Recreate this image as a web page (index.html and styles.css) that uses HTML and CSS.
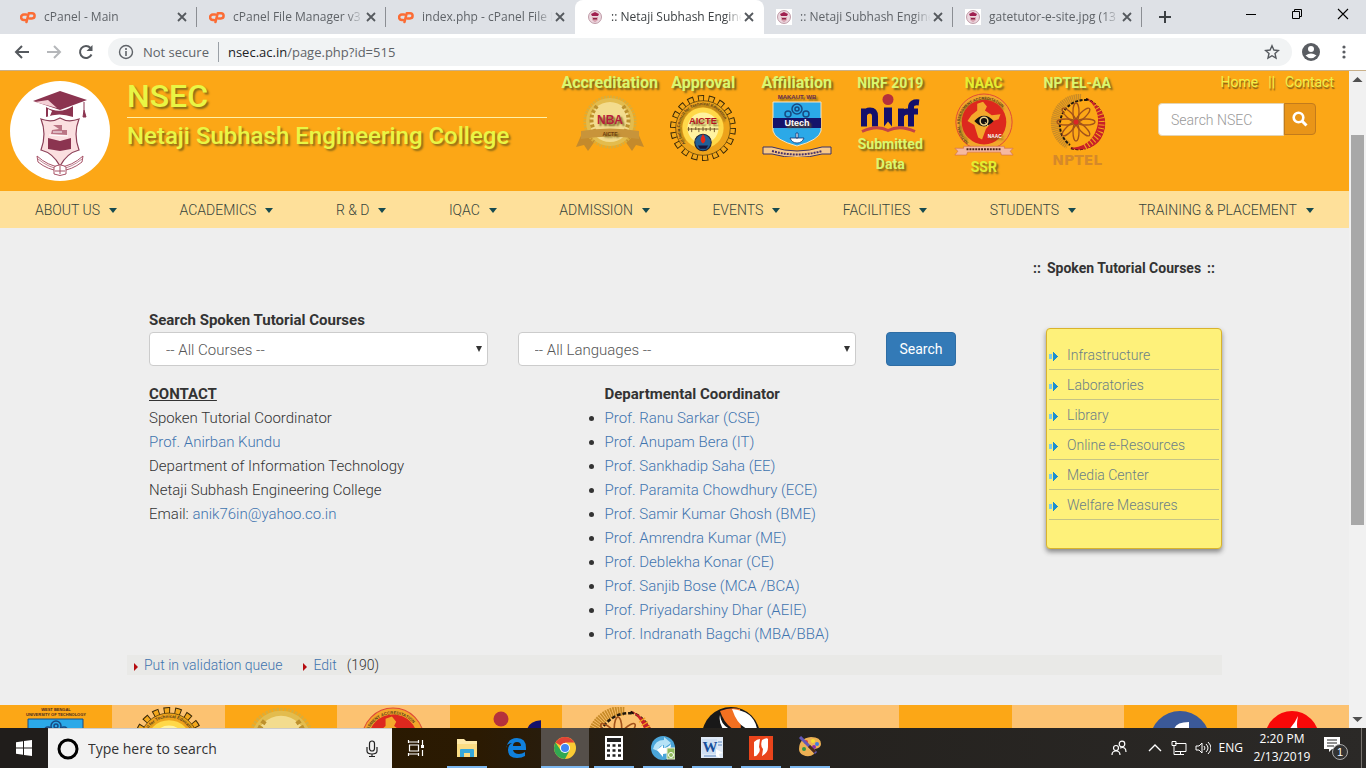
FILE: index.html
```html
<!DOCTYPE html>
<html lang="en">
<head>
<meta charset="utf-8">
<title>:: Netaji Subhash Engineering College ::</title>
<link rel="stylesheet" href="styles.css">
</head>
<body>
<svg class="defs" aria-hidden="true">
  <symbol id="cp" viewBox="0 0 16 16"><path d="M6 5.500H3.800a2.700 2.700 0 0 0 0 5.400H5M6.500 13 8.700 4.200h3.300a2.600 2.600 0 0 1 0 5.200H9.500" fill="none" stroke="#fb6c35" stroke-width="2.500" stroke-linecap="round" stroke-linejoin="round"/></symbol>
  <symbol id="crestmini" viewBox="0 0 16 16"><circle cx="8" cy="8" r="6.500" fill="#ecd8df" stroke="#a87888" stroke-width=".7"/><path d="M4 5l4-2 4 2-1 2H5z" fill="#a02050"/><path d="M5 8h6v3l-3 2.500L5 11z" fill="#d9a6b4"/><path d="M6 9h4v1.500H6z" fill="#8e2348"/></symbol>
  <symbol id="x" viewBox="0 0 12 12"><path d="M2 2l8 8M10 2l-8 8" stroke="#55595e" stroke-width="1.800"/></symbol>
  <symbol id="aicte" viewBox="0 0 64 64">
    <circle cx="32" cy="32" r="29" fill="none" stroke="#3c2a08" stroke-width="6" stroke-dasharray="5.900 4.222"/>
    <circle cx="32" cy="32" r="28.500" fill="none" stroke="#f3a81c" stroke-width="5" stroke-dasharray="4.100 5.848" stroke-dashoffset="-.850"/>
    <circle cx="32" cy="32" r="26.500" fill="#eda31b" stroke="#3c2a08" stroke-width=".6"/>
    <path id="ring" d="M15 47a22.500 22.500 0 1 1 34 0" fill="none"/>
    <text class="g-ring"><textPath href="#ring">All India Council for Technical Education</textPath></text>
    <circle cx="32" cy="32" r="20" fill="#ffd848"/><circle cx="32" cy="32" r="15" fill="#fff3a0"/>
    <text x="32" y="28" class="g-aicte">AICTE</text>
    <path d="M17 33h30M18 31v4M21 32v4M25 31v3M28 32v4M32 31v4M35 32v3M39 31v4M43 32v4" stroke="#604018" stroke-width=".8"/>
    <circle cx="32" cy="46" r="8" fill="#225f96" stroke="#223"/><path d="M32 38c4 5 2 8 0 9-3-2-3-5 0-9z" fill="#e52818"/><path d="M27 49h10l-2 3h-6z" fill="#18153c"/>
  </symbol>
  <symbol id="nba" viewBox="0 0 70 60">
    <path d="M8 38 1 54l8-2 4 6 12-17zM62 38l7 16-8-2-4 6-12-17z" fill="#c48a2c"/>
    <circle cx="35" cy="29" r="25" fill="none" stroke="#d9ad3b" stroke-width="3" stroke-dasharray="2 1"/>
    <circle cx="35" cy="29" r="24" fill="#e3bc4e"/><circle cx="35" cy="29" r="20" fill="#f3dc8e"/>
    <path d="M20 39Q12 25 22 13M50 39q8-14-2-26" fill="none" stroke="#bd902c" stroke-width="4" stroke-dasharray="3 2"/>
    <text x="35" y="31" class="g-nba">NBA</text>
    <path d="M6 38q29-5 58 0v8q-29-5-58 0z" fill="#c8943a"/><text x="35" y="43" class="g-small">AICTE</text>
  </symbol>
  <symbol id="naac" viewBox="0 0 64 66">
    <circle cx="32" cy="30" r="29" fill="#f3a62a" stroke="#df4938"/>
    <path id="ring2" d="M16 51a25 25 0 1 1 32 0" fill="none"/><text class="g-ring"><textPath href="#ring2">NATIONAL ASSESSMENT ACCREDITATION</textPath></text>
    <circle cx="32" cy="30" r="23" fill="#dd281e"/>
    <path d="M25 11l6-2 4 5-2 4 7 5 9-1-2 5-6 2-7 8-4 11-4-2-4-13-7-4 4-6 6-5z" fill="#f4a82c"/>
    <path d="M22 29q10-11 20 0-10 11-20 0z" fill="#151010"/><circle cx="32" cy="29" r="4" fill="none" stroke="#f0d38a" stroke-width="1.500"/><path d="M33 30l3 4" stroke="#f0d38a"/>
    <text x="43" y="46" class="g-naac">NAAC</text>
    <path d="M2 57h9v-2h42v2h9l-3 3 3 4H50l-1-3H15l-1 3H2l3-4z" fill="#f5b9a0" stroke="#cf6848" stroke-width=".6"/><path d="M14 58h36" stroke="#452018" stroke-width="2" stroke-dasharray="2 1"/>
  </symbol>
  <symbol id="nptel" viewBox="0 0 60 60">
    <g fill="none"><path d="M34 5a25 25 0 0 0-13 47" stroke="#c88b28" stroke-width="8" stroke-dasharray="1.300 .6"/><path d="M40 7a25 25 0 0 0-17 45" stroke="#20180d" stroke-width="2" stroke-dasharray="3 1.500"/>
    <path d="M39 6a25 25 0 0 1-16 49" stroke="#1d0d08" stroke-width="2" stroke-dasharray="3 1.500"/><path d="M40 5q20 11 18 29-3 18-19 22-9 2-16-1 18-1 25-15 9-19-8-35z" fill="#c92028"/><path d="M48 12q10 13 5 27-5 9-16 15" stroke="#f4a51e" stroke-width="6" stroke-dasharray="1 2.500"/>
    <g stroke="#a2521b" stroke-width="1.300"><ellipse cx="29" cy="19" rx="3" ry="9"/><ellipse cx="29" cy="39" rx="3" ry="9"/><ellipse cx="19" cy="29" rx="9" ry="3"/><ellipse cx="39" cy="29" rx="9" ry="3"/><g transform="rotate(45 29 29)"><ellipse cx="29" cy="19" rx="3" ry="9"/><ellipse cx="29" cy="39" rx="3" ry="9"/><ellipse cx="19" cy="29" rx="9" ry="3"/><ellipse cx="39" cy="29" rx="9" ry="3"/></g></g></g>
    <circle cx="29" cy="29" r="2.500" fill="#d92626"/>
  </symbol>
  <symbol id="nirf" viewBox="0 0 60 40">
    <circle cx="28" cy="6" r="5.500" fill="#b5313c"/>
    <g fill="none" stroke="#14106c" stroke-width="6"><path d="M4 33V15M4 21q2-4 6-4 5 0 5 6v10M41 33V15M41 22q2-4 7-4M51 33V14q0-6 8-5M46 18h12"/></g>
    <path d="M24 14h8v19l-4-5-4 5z" fill="#14106c"/><path d="M2 38q15-7 26-1 12-6 27 1" fill="none" stroke="#c34448" stroke-width="3"/>
  </symbol>
  <symbol id="utech" viewBox="0 0 70 64">
    <text x="35" y="6" class="g-mak">MAKAUT, WB</text>
    <path d="M11 9h48v29q-2 9-24 15Q13 47 11 38z" fill="#2ba9e8" stroke="#f7e3c0"/><path d="M11 25h48v10H11z" fill="#14136b"/>
    <g fill="none" stroke="#174a83" stroke-width="1.500"><circle cx="35" cy="16" r="5"/><circle cx="35" cy="16" r="2"/><circle cx="26" cy="21" r="3"/><circle cx="44" cy="21" r="3"/></g>
    <text x="35" y="33" class="g-utech">Utech</text><path d="M28 45h14q-2 5-7 5t-7-5zM34 40h2v5h-2z" fill="#fff" stroke="#123372" stroke-width=".8"/>
    <path d="M1 54h9q25 8 50 0h9v7h-9q-25 7-50 0H1z" fill="#f7c98b" stroke="#3b3267"/><path d="M10 58q25 7 50 0" fill="none" stroke="#473268" stroke-width="2" stroke-dasharray="2 1"/>
  </symbol>
</svg>

<div class="tabs">
  <div class="tab"><svg class="fav"><use href="#cp"/></svg><span>cPanel - Main</span><button aria-label="Close tab"><svg><use href="#x"/></svg></button></div>
  <div class="tab"><svg class="fav"><use href="#cp"/></svg><span>cPanel File Manager v3</span><button aria-label="Close tab"><svg><use href="#x"/></svg></button></div>
  <div class="tab before"><svg class="fav"><use href="#cp"/></svg><span>index.php - cPanel File M</span><button aria-label="Close tab"><svg><use href="#x"/></svg></button></div>
  <div class="tab active"><svg class="fav"><use href="#crestmini"/></svg><span>:: Netaji Subhash Engine</span><button aria-label="Close tab"><svg><use href="#x"/></svg></button></div>
  <div class="tab"><svg class="fav white"><use href="#crestmini"/></svg><span>:: Netaji Subhash Engine</span><button aria-label="Close tab"><svg><use href="#x"/></svg></button></div>
  <div class="tab"><svg class="fav white"><use href="#crestmini"/></svg><span>gatetutor-e-site.jpg (13</span><button aria-label="Close tab"><svg><use href="#x"/></svg></button></div>
  <button class="newtab" aria-label="New tab"><svg viewBox="0 0 12 12"><path d="M6 0v12M0 6h12" stroke="#3c4043" stroke-width="2"/></svg></button>
  <div class="wincontrols">
    <button aria-label="Minimize"><svg viewBox="0 0 12 12"><path d="M1 6.500h10" stroke="#000"/></svg></button>
    <button aria-label="Restore"><svg viewBox="0 0 12 12"><path d="M1.500 3.500h7v7h-7zM3.500 3V1.500h7v7H9" fill="none" stroke="#000"/></svg></button>
    <button aria-label="Close"><svg viewBox="0 0 12 12"><path d="M1 1l10 10M11 1L1 11" stroke="#000" stroke-width="1.100"/></svg></button>
  </div>
</div>

<div class="toolbar">
  <button aria-label="Back"><svg viewBox="0 0 16 16"><path d="M15 8H2M8 2L2 8l6 6" fill="none" stroke="#55595e" stroke-width="2"/></svg></button>
  <button aria-label="Forward"><svg viewBox="0 0 16 16"><path d="M1 8h13M8 2l6 6-6 6" fill="none" stroke="#b5b7ba" stroke-width="2"/></svg></button>
  <button aria-label="Reload"><svg viewBox="0 0 16 16"><path d="M13.500 10.500A6 6 0 1 1 12.500 4" fill="none" stroke="#55595e" stroke-width="2"/><path d="M14.500 1v6h-6z" fill="#55595e"/></svg></button>
  <div class="omnibox">
    <svg viewBox="0 0 16 16"><circle cx="8" cy="8" r="6.500" fill="none" stroke="#5f6368" stroke-width="1.400"/><path d="M8 7v5M8 4v2" stroke="#5f6368" stroke-width="1.600"/></svg>
    <span class="secure">Not secure</span><span class="url"><b>nsec.ac.in</b>/page.php?id=515</span>
    <button aria-label="Bookmark"><svg viewBox="0 0 16 16"><path d="M8 1.800l1.900 4.200 4.500.5-3.400 3 1 4.500L8 11.700 4 14l1-4.500-3.400-3 4.500-.5z" fill="none" stroke="#55595e" stroke-width="1.400"/></svg></button>
  </div>
  <button class="profile" aria-label="Profile"><svg viewBox="0 0 18 18"><circle cx="9" cy="9" r="9" fill="#5a5d62"/><circle cx="9" cy="6" r="3" fill="#fff"/><path d="M3.500 12.500q5.500-4 11 0-5.500 5.500-11 0z" fill="#fff"/></svg></button>
  <button class="more" aria-label="Menu"><svg viewBox="0 0 16 16"><g fill="#5a5d62"><circle cx="8" cy="3" r="1.600"/><circle cx="8" cy="8" r="1.600"/><circle cx="8" cy="13" r="1.600"/></g></svg></button>
</div>

<div class="viewport">
  <div class="page">
    <header class="masthead">
      <div class="crest"><svg viewBox="0 0 100 100">
        <circle cx="50" cy="50" r="50" fill="#fff"/>
        <path d="M23 20 50 10l27 9-27 10z" fill="#8b3450"/><path d="M25 21l13-2 9 8z" fill="#f4cfd5"/><path d="M36 26q14 8 27-1v11q-14-5-27 0z" fill="#8b3450"/><path d="M38 28l4 2-2 5-2 1z" fill="#fff"/><path d="M74 21v8l-1 7h3l-2-7" stroke="#8b3450" fill="#8b3450"/>
        <path d="M31 38q11 4 19-1 8 5 19 1-6 15 0 31-12 3-19 16-7-13-19-16 6-16 0-31z" fill="#fbdfe0" stroke="#8b4058" stroke-width="1.200"/>
        <path d="M38 57l12 3 11-3v11l-11 2-12-2z" fill="#8b3450"/><path d="M43 44h9v5h5v5l-16-1 1-4 7-1z" fill="#bb7585"/><path d="M39 54l19 1M43 51h9" stroke="#fff"/>
        <path d="M27 75q11 10 23 11 12-1 23-11l-1 6q-10 8-22 9-12-1-22-9z" fill="#fff" stroke="#a75267"/><path d="M28 78q11 9 22 10 11-1 22-10" fill="none" stroke="#a75267" stroke-width=".7"/><path d="M44 86q6-4 12 0v7q-6 3-12 0z" fill="#fff" stroke="#a75267"/><path d="M45 90h10M50 85v8" stroke="#a75267"/>
      </svg></div>
      <div class="titles"><h1>NSEC</h1><h2>Netaji Subhash Engineering College</h2></div>
      <div class="badges">
        <a href="#"><b>Accreditation</b><svg class="nba"><use href="#nba"/></svg></a>
        <a href="#"><b>Approval</b><svg class="aicte"><use href="#aicte"/></svg></a>
        <a href="#"><b>Affiliation</b><svg class="utech"><use href="#utech"/></svg></a>
        <a href="#" class="small"><b>NIRF 2019</b><svg class="nirf"><use href="#nirf"/></svg><b>Submitted<br>Data</b></a>
        <a href="#" class="small"><b class="lime">NAAC</b><svg class="naac"><use href="#naac"/></svg><b class="lime">SSR</b></a>
        <a href="#" class="small"><b>NPTEL-AA</b><svg class="nptel"><use href="#nptel"/></svg><strong>NPTEL</strong></a>
      </div>
      <div class="tools">
        <div class="toplinks"><a href="#">Home</a><span>||</span><a href="#">Contact</a></div>
        <form class="search"><input type="text" aria-label="Search NSEC" placeholder="Search NSEC"><button type="button" aria-label="Search"><svg viewBox="0 0 16 16"><circle cx="6.500" cy="6.500" r="4.800" fill="none" stroke="#fff" stroke-width="2.600"/><path d="M10 10l4.500 4.500" stroke="#fff" stroke-width="3"/></svg></button></form>
      </div>
    </header>
    <nav class="menu">
      <a href="#">ABOUT US</a><a href="#">ACADEMICS</a><a href="#">R &amp; D</a><a href="#">IQAC</a><a href="#">ADMISSION</a><a href="#">EVENTS</a><a href="#">FACILITIES</a><a href="#">STUDENTS</a><a href="#">TRAINING &amp; PLACEMENT</a>
    </nav>
    <main>
      <h3 class="crumb"><span>::</span><span>Spoken Tutorial Courses</span><span>::</span></h3>
      <div class="columns">
        <div class="content">
          <form class="filter">
            <label for="course">Search Spoken Tutorial Courses</label>
            <div class="fields">
              <div class="field"><select id="course"><option>-- All Courses --</option></select></div>
              <div class="field"><select aria-label="Language"><option>-- All Languages --</option></select></div>
              <button type="button">Search</button>
            </div>
          </form>
          <div class="info">
            <div><b class="u">CONTACT</b><br>Spoken Tutorial Coordinator<br><a href="#">Prof. Anirban Kundu</a><br>Department of Information Technology<br>Netaji Subhash Engineering College<br>Email: <a href="#">anik76in@yahoo.co.in</a></div>
            <div class="coord"><b>Departmental Coordinator</b>
              <ul>
                <li><a href="#">Prof. Ranu Sarkar (CSE)</a></li><li><a href="#">Prof. Anupam Bera (IT)</a></li><li><a href="#">Prof. Sankhadip Saha (EE)</a></li><li><a href="#">Prof. Paramita Chowdhury (ECE)</a></li><li><a href="#">Prof. Samir Kumar Ghosh (BME)</a></li><li><a href="#">Prof. Amrendra Kumar (ME)</a></li><li><a href="#">Prof. Deblekha Konar (CE)</a></li><li><a href="#">Prof. Sanjib Bose (MCA /BCA)</a></li><li><a href="#">Prof. Priyadarshiny Dhar (AEIE)</a></li><li><a href="#">Prof. Indranath Bagchi (MBA/BBA)</a></li>
              </ul>
            </div>
          </div>
        </div>
        <aside class="side">
          <a href="#">Infrastructure</a><a href="#">Laboratories</a><a href="#">Library</a><a href="#">Online e-Resources</a><a href="#">Media Center</a><a href="#">Welfare Measures</a>
        </aside>
      </div>
      <div class="admin"><a href="#">Put in validation queue</a><a href="#">Edit</a><span>(190)</span></div>
    </main>
    <footer class="strip">
      <a href="#" aria-label="University of Technology"><svg viewBox="0 0 70 70"><text x="35" y="4" class="g-wb">WEST BENGAL</text><text x="35" y="9" class="g-wb">UNIVERSITY OF TECHNOLOGY</text><path d="M7 12h55v40q-28 20-55 0z" fill="#2ba9e8" stroke="#174a83"/><g fill="none" stroke="#174a83" stroke-width="1.500"><circle cx="35" cy="19" r="5"/><circle cx="35" cy="19" r="2"/><circle cx="27" cy="24" r="4"/><circle cx="43" cy="24" r="4"/></g></svg></a>
      <a href="#" aria-label="AICTE"><svg><use href="#aicte"/></svg></a>
      <a href="#" aria-label="NBA"><svg viewBox="7 2 56 56"><use href="#nba" width="70" height="60"/></svg></a>
      <a href="#" aria-label="NAAC"><svg><use href="#naac"/></svg></a>
      <a href="#" aria-label="NIRF"><svg viewBox="0 0 70 70"><circle cx="30" cy="12" r="7.500" fill="#b5313c"/><path d="M60 50V25q0-8 14-8" fill="none" stroke="#14106c" stroke-width="8"/><path d="M25 28h10v30H25z" fill="#14106c"/></svg></a>
      <a href="#" aria-label="NPTEL"><svg viewBox="1 2 56 56"><use href="#nptel" width="60" height="60"/></svg></a>
      <a href="#" aria-label="Spoken Tutorial"><svg viewBox="0 0 70 70"><circle cx="35" cy="29" r="29" fill="#181818"/><path d="M24 4q10-4 20-2l1 23q-15-3-21-21z" fill="#f37021"/><path d="M36 2q22 2 25 20-17 4-25-20zM24 8q1 10 10 14l-4 4Q22 17 24 8z" fill="#fff"/></svg></a>
      <span></span><span></span><span></span>
      <a href="#" aria-label="Facebook"><svg viewBox="0 0 70 70"><circle cx="35" cy="34" r="30" fill="#3b5998"/><path d="M44 15v7q-6 0-6 3v5h6v8h-6v25h-9V24q0-9 15-9z" fill="#fff"/></svg></a>
      <a href="#" aria-label="News"><svg viewBox="0 0 70 70"><circle cx="34" cy="31" r="27" fill="#f90808"/><path d="M40 9q-2 10 0 14l9 2-22 26 5-22h-9q12-8 17-20z" fill="#fff"/></svg></a>
    </footer>
  </div>
  <div class="scrollbar"><i class="up"></i><i class="above"></i><i class="thumb"></i><i class="below"></i><i class="down"></i></div>
</div>

<div class="taskbar">
  <button class="start" aria-label="Start"><svg viewBox="0 0 16 16"><path d="M0 2.200 7 1.200v6.300H0zM8 1l8-1v7.500H8zM0 8.500h7v6.300l-7-1zM8 8.500h8V16l-8-1z" fill="#fff"/></svg></button>
  <div class="cortana"><svg class="halo" viewBox="0 0 22 22"><circle cx="11" cy="11" r="9" fill="none" stroke="#000" stroke-width="3"/></svg><input type="text" aria-label="Type here to search" placeholder="Type here to search"><svg class="mic" viewBox="0 0 16 18"><rect x="5.500" y="1" width="5" height="10" rx="2.500" fill="none" stroke="#222" stroke-width="1.200"/><path d="M3 7v4q0 3 5 3t5-3V7M8 14v3M5 16.500h6" fill="none" stroke="#222" stroke-width="1.200"/></svg></div>
  <button class="app view" aria-label="Task view"><svg viewBox="0 0 24 24"><path d="M5 6h9M5 18h9M5.500 9h9v6h-9zM4.500 4v3M14.500 4v3M4.500 20v-3M14.500 20v-3M18.500 4v5M18.500 14v6" fill="none" stroke="#fff" stroke-width="1.200"/><path d="M17 9h3v3h-3z" fill="#fff"/></svg></button>
  <button class="app open" aria-label="File Explorer"><svg viewBox="0 0 24 24"><path d="M2 3h7l2 2h11v16H2z" fill="#ffe9a8"/><path d="M2 8h20v13H2z" fill="#fbdc83"/><path d="M5 21v-7q0-1 1-1h12q1 0 1 1v7h-4v-4H9v4z" fill="#36a8db"/></svg></button>
  <button class="app" aria-label="Edge"><svg viewBox="0 0 24 24"><path d="M2 12Q4 2 13 2q9 0 9 10v2H9q1 4 6 4 3 0 6-2v4q-3 2-8 2-9 0-9-8 0-5 4-7-6 1-6 5zM9 10h8q0-4-4-4t-4 4z" fill="#1080dc"/></svg></button>
  <button class="app open current" aria-label="Chrome"><svg viewBox="0 0 24 24"><circle cx="12" cy="12" r="11" fill="#fbcb34"/><path d="M12 12 2.500 6.500A11 11 0 0 1 21.500 6.500H12z" fill="#df4336"/><path d="M2.500 6.500A11 11 0 0 0 12 23l4.500-8.500L12 12 7.500 14z" fill="#31a852"/><circle cx="12" cy="12" r="5" fill="#fff"/><circle cx="12" cy="12" r="4" fill="#4286f4"/></svg></button>
  <button class="app open" aria-label="Calculator"><svg viewBox="0 0 24 24"><path d="M3 0h18v24H3z" fill="#fff"/><path d="M5 2h14v4H5z" fill="#222"/><path d="M5 9.500h14M5 14.500h14M5 19.500h14" stroke="#222" stroke-width="2.500" stroke-dasharray="3 2.500"/></svg></button>
  <button class="app open" aria-label="Sync"><svg viewBox="0 0 24 24"><circle cx="12" cy="12" r="12" fill="#4ba5d9"/><path d="M2 13q2-9 11-9V1l7 6-7 5V9q-5 0-6 6z" fill="#b6e2f6"/><path d="M6 14l6-5v3q5 0 8-4 0 10-8 10v3z" fill="#fff"/><path d="M16 12h8v11h-8z" fill="#8fba5c" stroke="#e7f0da"/><circle cx="20" cy="19" r="2.500" fill="none" stroke="#fff"/></svg></button>
  <button class="app open" aria-label="Word"><svg viewBox="0 0 24 24"><path d="M1 1h22v21H1z" fill="#dfe9f6"/><path d="M2 3h15v15H2z" fill="#cfdff2"/><text x="10" y="16" class="g-word">W</text><path d="M18 6h4M18 9h4M4 20h12" stroke="#5c86bd"/><path d="M16 13l7 4-4 1 1 4-4-2z" fill="#fff"/></svg></button>
  <button class="app open" aria-label="Reader"><svg viewBox="0 0 24 24"><path d="M0 0h24v24H0z" fill="#e9441b"/><path d="M5 6q3-3 6-3l-1 8q2 4-1 7-2 3-4 2zM13 4q5-3 6-1v8q0 6-6 9l1-7q-3-3-1-9z" fill="#fff"/></svg></button>
  <button class="app open" aria-label="Paint"><svg viewBox="0 0 24 24"><path d="M1 13Q1 2 13 1q10 0 10 7 0 4-6 5-2 3-1 5-5 4-11 1-4-2-4-6z" fill="#edb054"/><g><circle cx="8" cy="6" r="2" fill="#e23a2c"/><circle cx="15" cy="5" r="2" fill="#f5de34"/><circle cx="19" cy="8" r="2" fill="#3f7ee0"/><circle cx="16" cy="11" r="2" fill="#8d2dab"/><circle cx="6" cy="13" r="2" fill="#30964a"/></g><path d="M2 1l16 16" stroke="#6358b8" stroke-width="3"/><path d="M11 10l6 6" stroke="#4f2c16" stroke-width="3"/></svg></button>
  <div class="tray">
    <svg class="people" viewBox="0 0 16 16"><g fill="none" stroke="#fff" stroke-width="1.200"><circle cx="5" cy="8" r="2.500"/><path d="M1 15q0-4 4-4t4 4"/><circle cx="11" cy="4" r="2.800"/><path d="M9 8q6-2 6 4"/></g></svg>
    <svg class="chev" viewBox="0 0 14 16"><path d="M1 11l6-6 6 6" fill="none" stroke="#fff" stroke-width="1.400"/></svg>
    <svg viewBox="0 0 16 16"><path d="M4 3.500h11v8H4M1 1.500h4v4H1zM3 6v8.500h10M9.500 12v3" fill="none" stroke="#fff"/></svg>
    <svg viewBox="0 0 16 16"><path d="M1 6h3l3-3v10l-3-3H1z" fill="none" stroke="#fff"/><path d="M9 6q2 2 0 4M11 4q4 4 0 8M13 2q6 6 0 12" fill="none" stroke="#fff"/></svg>
    <span class="lang">ENG</span>
    <time>2:20 PM<br>2/13/2019</time>
    <svg class="note" viewBox="0 0 24 24"><path d="M0 1h16v12H8l-3 3v-3H0z" fill="#fff"/><path d="M3 4h10M3 7h10M3 10h7" stroke="#222" stroke-width="1.200"/><circle cx="16" cy="16" r="7.500" fill="#333" stroke="#aaa"/><text x="16" y="20" class="g-note">1</text></svg>
  </div>
</div>
</body>
</html>
```
FILE: styles.css
```css
* { box-sizing: border-box; }
body { margin: 0; height: 100vh; display: flex; flex-direction: column; overflow: hidden; font: 300 16px/24px Roboto, sans-serif; color: #333; background: #fff; }
button, input, select { font: inherit; margin: 0; padding: 0; border: 0; background: none; }
button { display: flex; align-items: center; justify-content: center; }
a { color: #3f74ae; text-decoration: none; }
b { font-weight: 700; }
svg { display: block; flex: none; width: 16px; height: 16px; }
.defs { display: none; }

/* Lettering inside the emblems */
svg text { font-family: "Liberation Sans", sans-serif; text-anchor: middle; }
svg .g-ring { font-size: 4px; font-weight: 700; fill: #59401c; text-anchor: start; }
svg .g-aicte { font-size: 9px; font-weight: 700; fill: #b5121e; }
svg .g-nba { font-size: 12px; font-weight: 700; fill: #b51f3c; }
svg .g-small { font-size: 5px; font-weight: 700; fill: #6a3d10; }
svg .g-naac { font-size: 5px; font-weight: 700; fill: #fff; }
svg .g-mak { font-size: 6px; font-weight: 700; fill: #6a2d50; }
svg .g-utech { font-size: 9px; font-weight: 700; fill: #fff; }
svg .g-wb { font-size: 4px; font-weight: 700; fill: #4a2a20; }
svg .g-word { font: 700 15px "Liberation Serif", serif; fill: #174f9c; }
svg .g-note { font-size: 11px; fill: #fff; }

/* Browser frame */
.tabs { flex: none; height: 34px; display: flex; padding-left: 8px; background: #dee1e6; font: 12px/34px "Open Sans", sans-serif; color: #5f6368; }
.tab { flex: 0 1 189px; min-width: 0; display: flex; align-items: center; padding: 0 9px 0 12px; background: linear-gradient(#8b8e93, #8b8e93) right center / 1px 20px no-repeat; }
.tab.before { background: none; }
.tab.active { background: #fff; border-radius: 8px 8px 0 0; color: #3c4043; }
.tab span { flex: 1; min-width: 0; margin: 0 0 0 8px; overflow: hidden; white-space: nowrap; mask-image: linear-gradient(90deg, #000 86%, transparent 99%); }
.tab button svg { width: 12px; height: 12px; }
.white { background: #fff; }
.newtab { width: 46px; }
.newtab svg { width: 12px; height: 12px; }
.wincontrols { display: flex; margin-left: auto; height: 28px; }
.wincontrols button { width: 46px; }
.wincontrols svg { width: 12px; height: 12px; }
.toolbar { flex: none; height: 37px; display: flex; align-items: center; padding: 0 14px; border-bottom: 1px solid #c9b089; font: 14px/20px "Open Sans", sans-serif; }
.toolbar > button { width: 16px; margin-right: 16px; }
.toolbar > .profile { width: 18px; margin: 0 16px 0 10px; }
.toolbar .profile svg { width: 18px; height: 18px; }
.toolbar > .more { margin: 0; }
.omnibox { flex: 1; height: 28px; display: flex; align-items: center; gap: 9px; padding: 0 12px 0 10px; margin-left: -2px; border-radius: 14px; background: #f1f3f4; color: #5f6368; }
.omnibox .secure { padding-right: 9px; border-right: 1px solid #9aa0a6; font-size: 13px; }
.omnibox .url { font-size: 13px; }
.omnibox b { font-weight: 400; color: #202124; }
.omnibox button { margin-left: auto; }

.viewport { flex: 1; min-height: 0; display: flex; }
.page { flex: 1; min-width: 0; overflow: hidden; background: #eee; }
.scrollbar { flex: none; width: 17px; display: flex; flex-direction: column; align-items: center; background: #f1f1f1; }
.up, .down { height: 17px; width: 17px; background: #505050; clip-path: polygon(50% 6px, 80% 11px, 20% 11px); }
.down { clip-path: polygon(20% 6px, 80% 6px, 50% 11px); }
.above { flex: 47; }
.thumb { flex: 390; width: 13px; background: #a8a8a8; }
.below { flex: 186; }

/* Site header */
.masthead { display: grid; grid-template-columns: 127fr 436fr 561fr 225fr; min-height: 120px; background: #fca716; }
.crest { padding: 10px; }
.crest svg { width: 100px; height: 100px; }
.titles { padding-right: 16px; color: #e9f644; text-shadow: 2px 2px 2px #8d6c16; white-space: nowrap; }
.titles h1 { margin: 0; padding-top: 4px; border-bottom: 1px solid #fff0a8; font-size: 32px; line-height: 42px; font-weight: 500; }
.titles h2 { margin: 0; font-size: 24px; line-height: 36px; font-weight: 500; }
.badges { display: grid; grid-template-columns: repeat(6, 1fr); justify-items: center; }
.badges a { width: 0; display: flex; flex-direction: column; align-items: center; font-size: 16px; line-height: 20px; text-align: center; white-space: nowrap; color: #d9f76f; text-shadow: 2px 2px 2px #73601a; padding-top: 2px; }
.badges b { line-height: 20px; }
.badges .small { font-size: 14px; }
.badges .lime { color: #e3ee31; }
.badges strong { color: #d5892a; font: 700 14px/14px "DejaVu Sans", sans-serif; text-shadow: none; }
.nba { width: 72px; height: 60px; }
.aicte { width: 66px; height: 66px; margin-top: 2px; }
.utech { width: 70px; height: 64px; }
.nirf { width: 60px; height: 41px; }
.naac { width: 64px; height: 64px; }
.nptel { width: 62px; height: 60px; }
.tools { padding: 0 15px 0 34px; }
.toplinks { display: flex; justify-content: flex-end; gap: 10px; font-size: 14px; line-height: 22px; font-weight: 400; color: #eef04b; text-shadow: 1px 2px 1px #815f16; }
.toplinks a { color: inherit; }
.search { display: flex; width: 158px; margin-top: 10px; font-size: 14px; }
.search input { flex: 1; min-width: 0; height: 33px; padding: 0 12px; background: #fff; border: 1px solid #e4d4b4; border-radius: 4px 0 0 4px; }
.search input::placeholder { color: #999; }
.search button { width: 32px; height: 32px; background: #e99518; border: 1px solid #c27b1c; border-radius: 0 4px 4px 0; }
.menu { display: flex; justify-content: space-between; padding: 2px 35px 0; background: #fee09a; font-size: 14px; line-height: 35px; white-space: nowrap; }
.menu a { color: #36443c; }
.menu a::after, .field::after { content: ""; display: inline-block; }
.menu a::after { margin-left: 9px; border: 4px solid transparent; border-top: 5px solid #174b50; border-bottom: 0; vertical-align: 2px; }

/* Page body */
main { padding: 30px 127px 30px; }
.crumb { display: flex; justify-content: flex-end; gap: 6px; margin: 0 7px 30px 0; font-size: 14px; line-height: 21px; font-weight: 700; }
.columns { display: grid; grid-template-columns: 1fr 176px; column-gap: 90px; align-items: start; padding: 0 0 0 22px; }
.filter label { display: block; font-size: 15px; line-height: 23px; font-weight: 700; }
.fields { display: flex; gap: 30px; margin-bottom: 16px; font-size: 15px; }
.field { flex: 1; position: relative; }
.field select { width: 100%; height: 34px; padding: 1px 16px 0; appearance: none; background: #fff; border: 1px solid #ccc; border-radius: 4px; color: #555; }
.field::after { position: absolute; right: 6px; top: 14px; border: 3px solid transparent; border-top: 6px solid #333; border-bottom: 0; }
.fields button { width: 70px; height: 34px; border: 1px solid #2e6da4; border-radius: 4px; background: #337ab7; color: #fff; font-size: 14px; font-weight: 400; }
.info { display: grid; grid-template-columns: 415fr 391fr; font-size: 15px; }
.u { text-decoration: underline; }
.coord { padding-left: 40px; }
.coord ul { margin: 0; padding: 0; }
.side { margin-top: 19px; padding: 11px 2px 28px; background: #fef17a; border: 1px solid #d9b32c; border-radius: 4px; box-shadow: 0 3px 5px #888; }
.side a { display: block; padding: 2px 0 0 18px; border-bottom: 1px solid #c5c485; color: #6b7f87; font-size: 14px; line-height: 27px; background: linear-gradient(#7fc9e8, #7fc9e8) 0 14px / 3px 5px no-repeat, conic-gradient(from 225deg at 100% 50%, #1b8fd2 90deg, transparent 0) 4px 12px / 5px 9px no-repeat; }
.admin { display: flex; gap: 10px; margin-top: 9px; padding-left: 6px; background: #e9e9e7; font-size: 14px; line-height: 20px; }
.admin a::before { content: ""; display: inline-block; margin: 0 6px 0 1px; border: 4px solid transparent; border-left-color: #b60c10; border-right: 0; vertical-align: -1px; }
.admin a + a { margin-left: 10px; }
.strip { display: grid; grid-template-columns: repeat(12, 1fr); }
.strip > * { height: 112px; padding-top: 2px; display: flex; justify-content: center; background: #fcc271; }
.strip > :nth-child(odd) { background: #fca716; }
.strip svg { width: 70px; height: 70px; }

/* Desktop taskbar */
.taskbar { flex: none; height: 40px; display: flex; background: linear-gradient(90deg, #241700, #2b1a02 35%, #23201c 48%, #2b2927); color: #fff; font: 12px/18px "Open Sans", sans-serif; }
.start { width: 48px; background: #201d1b; }
.cortana { width: 344px; display: flex; align-items: center; padding: 0 12px 0 9px; border-top: 1px solid #ccc; background: #f2f2f2; font-size: 14px; }
.cortana .halo { width: 22px; height: 22px; }
.cortana input { flex: 1; min-width: 0; margin-left: 9px; height: 38px; }
.cortana input::placeholder { color: #333; }
.cortana .mic { width: 16px; height: 18px; }
.app { width: 48px; margin-right: 1px; }
.app.view { margin-right: 3px; }
.app svg { width: 24px; height: 24px; }
.app.open { background: linear-gradient(#7cb7ef, #7cb7ef) bottom / 40px 2px no-repeat; }
.app.current { background: linear-gradient(#7cb7ef, #7cb7ef) bottom / 48px 2px no-repeat, #554f4a; }
.tray { margin-left: auto; display: flex; align-items: center; margin-right: 4px; padding-right: 13px; border-right: 1px solid #77736f; }
.tray svg { margin-right: 8px; }
.tray .people { margin-right: 21px; }
.tray .chev { width: 14px; margin-right: 9px; }
.tray time { width: 60px; margin: 0 12px 0 9px; text-align: center; }
.tray .note { width: 24px; height: 24px; margin: 0; }
```
